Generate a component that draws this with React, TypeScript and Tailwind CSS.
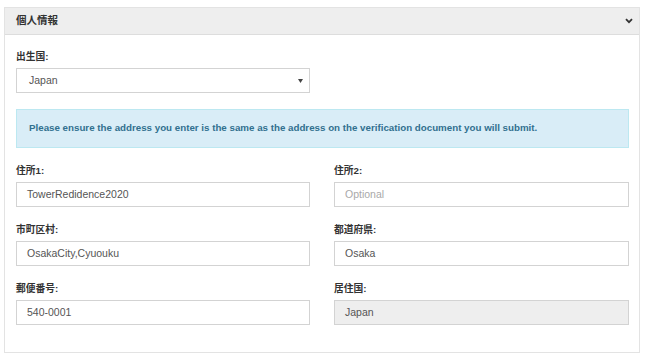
import React from "react";

const font = { fontFamily: '"Liberation Sans", Arial, "Noto Sans CJK JP", sans-serif' };

type Field = {
  label: string;
  value?: string;
  placeholder?: string;
  disabled?: boolean;
};

const fields: Field[] = [
  { label: "住所1:", value: "TowerRedidence2020" },
  { label: "住所2:", placeholder: "Optional" },
  { label: "市町区村:", value: "OsakaCity,Cyuouku" },
  { label: "都道府県:", value: "Osaka" },
  { label: "郵便番号:", value: "540-0001" },
  { label: "居住国:", value: "Japan", disabled: true },
];

const FieldBox: React.FC<{ field: Field }> = ({ field }) => {
  return (
    <div className="flex flex-col">
      <label className="h-[15px] mb-[4px] text-[9.75px] leading-[15px] font-bold text-[#333]">
        {field.label}
      </label>
      <div
        className={`h-[25px] border border-[#d3d3d3] flex items-center px-[10px] text-[10.5px] ${
          field.disabled ? "bg-[#eeeeee]" : "bg-white"
        }`}
      >
        {field.value ? (
          <span className="text-[#555]">{field.value}</span>
        ) : (
          <span className="text-[#a9a9a9]">{field.placeholder}</span>
        )}
      </div>
    </div>
  );
};

const App: React.FC = () => {
  return (
    <div className="w-[646px] h-[360px] bg-white pl-[4px] pt-[7px]" style={font}>
      <div className="w-[636px] h-[346px] border border-[#e3e3e3] bg-white">
        <div className="h-[27px] bg-[#eeeeee] border-b border-[#dddddd] flex items-center justify-between pl-[11px] pr-[6px]">
          <p className="text-[10.5px] font-bold text-[#333]">個人情報</p>
          <svg width="8" height="6" viewBox="0 0 8 6" className="mt-[-1px]">
            <path d="M1 1.2 L4 4.2 L7 1.2" fill="none" stroke="#333" strokeWidth="1.8" />
          </svg>
        </div>
        <div className="pt-[14px] pl-[11px] pr-[10px]">
          <div className="w-[294px] flex flex-col">
            <label className="h-[15px] mb-[4px] text-[9.75px] leading-[15px] font-bold text-[#333]">
              出生国:
            </label>
            <div className="h-[25px] border border-[#d3d3d3] flex items-center justify-between pl-[12px] pr-[6px] text-[10.5px] text-[#555]">
              <span>Japan</span>
              <svg width="5" height="4" viewBox="0 0 5 4">
                <path d="M0 0 H5 L2.5 4 Z" fill="#444" />
              </svg>
            </div>
          </div>
          <div className="mt-[16px] h-[39px] bg-[#d9edf7] border border-[#bce8f1] flex items-center pl-[12px] text-[9.75px] font-bold text-[#31708f]">
            Please ensure the address you enter is the same as the address on the verification document you will submit.
          </div>
          <div className="mt-[15px] grid grid-cols-[294px_295px] gap-x-[24px] gap-y-[15px]">
            {fields.map((f) => (
              <FieldBox key={f.label} field={f} />
            ))}
          </div>
        </div>
      </div>
    </div>
  );
};

export default App;
